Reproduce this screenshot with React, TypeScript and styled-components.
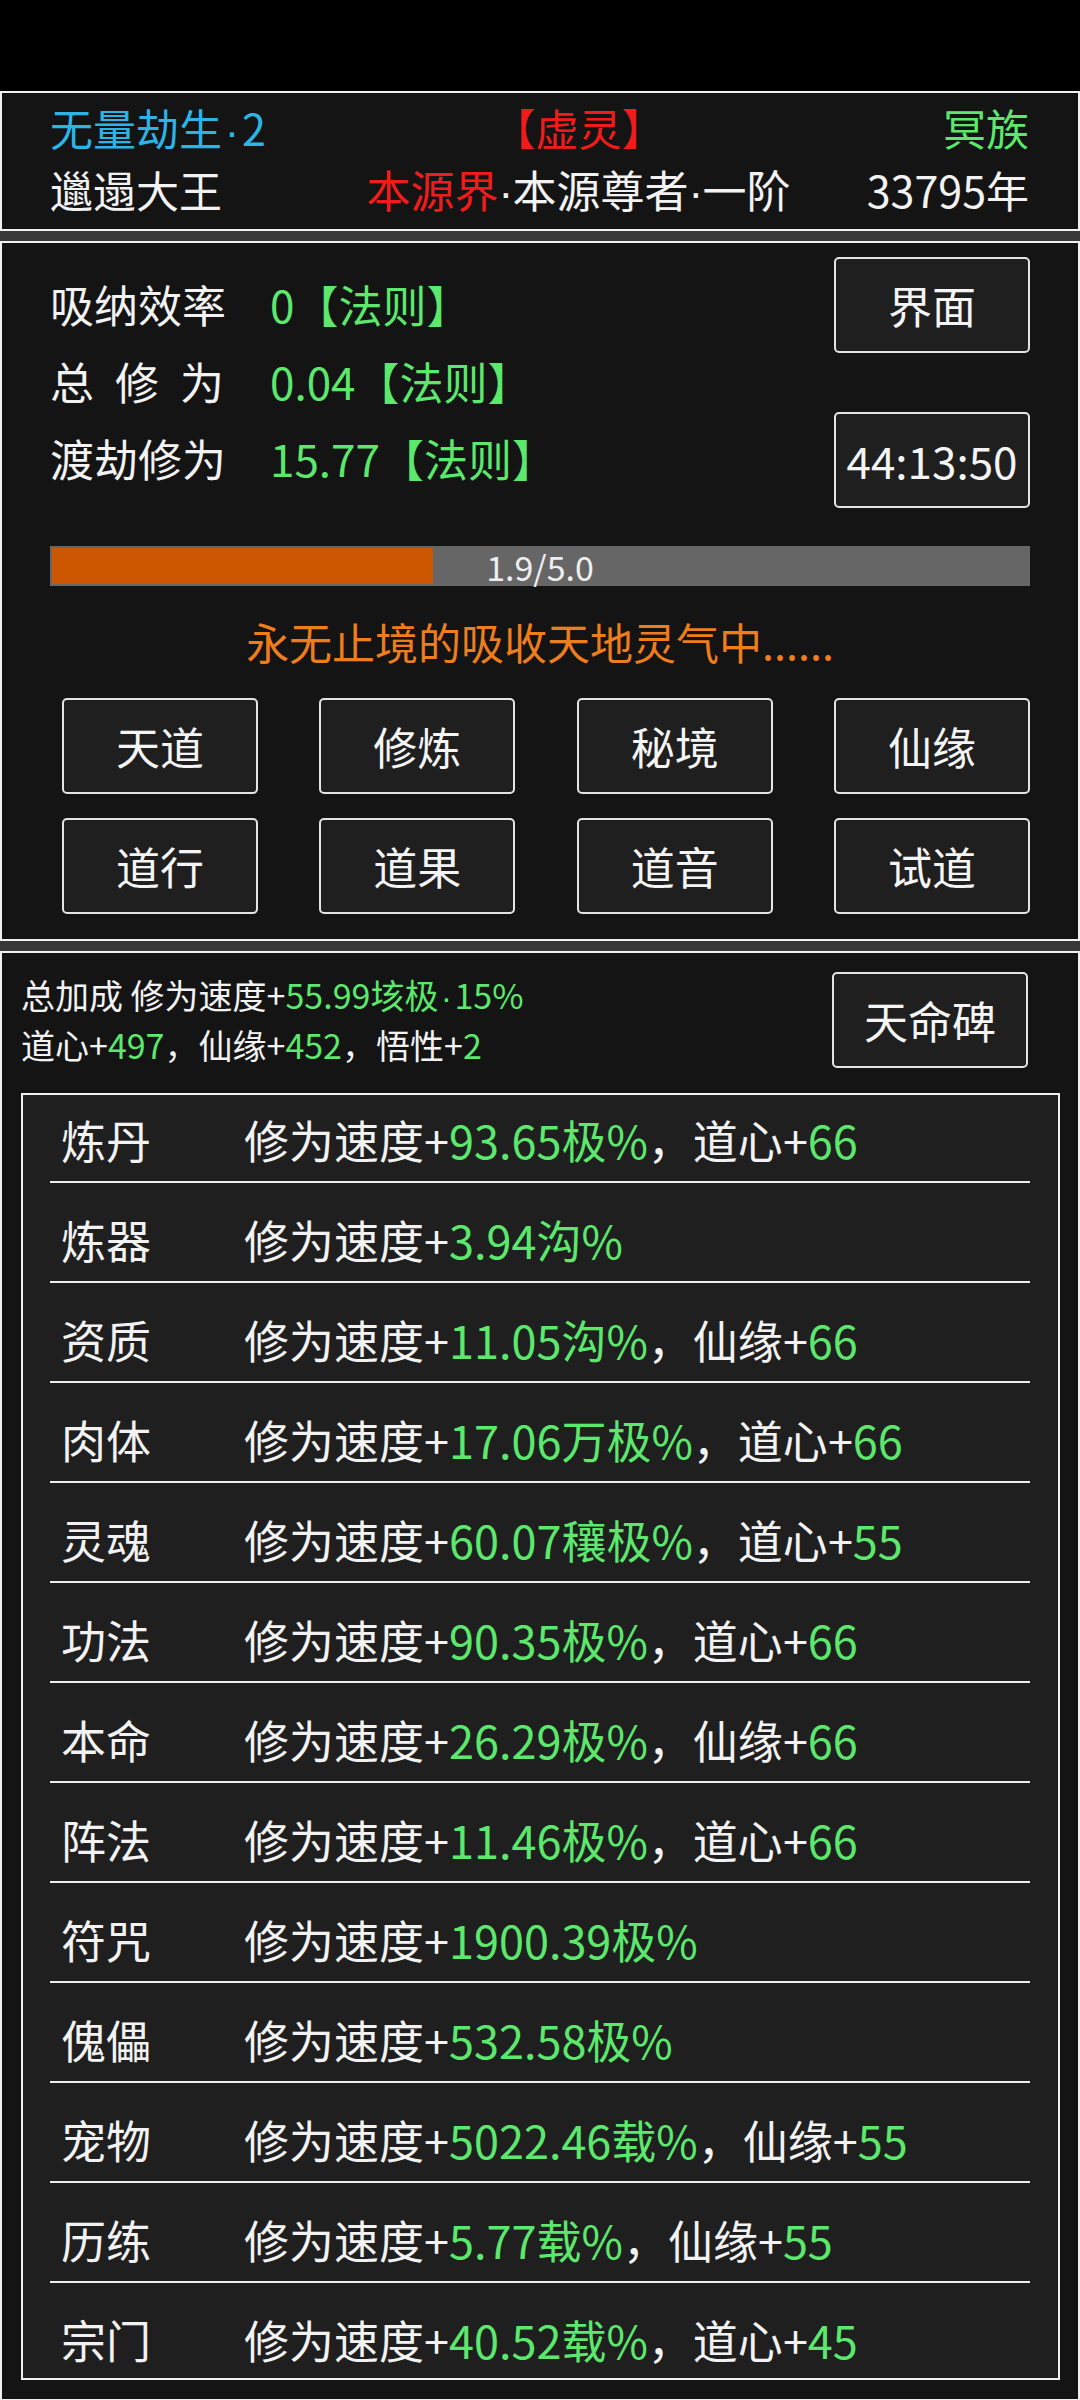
import React from "react";
import styled, { createGlobalStyle } from "styled-components";

const Global = createGlobalStyle`
  html, body { margin: 0; padding: 0; background: #383838; }
  body {
    font-family: "Noto Sans CJK SC", "Noto Sans", sans-serif;
    color: #f2f2f2;
  }
  * { box-sizing: border-box; }
`;

const Page = styled.div`
  width: 1080px;
  display: flex;
  flex-direction: column;
  background: #383838;
`;

const StatusBar = styled.div`
  height: 91px;
  background: #000;
`;

const Panels = styled.div`
  display: flex;
  flex-direction: column;
  gap: 10px;
`;

const Panel = styled.section<{ $pad: string }>`
  background: #141414;
  border: 2px solid #f0f0f0;
  padding: ${(p) => p.$pad};
`;

const HeaderRow = styled.div`
  display: grid;
  grid-template-columns: 280px 1fr 202px;
  font-size: 43px;
  line-height: 62px;
  height: 62px;
  white-space: nowrap;
`;

const Cell = styled.div<{ $align: "left" | "center" | "right"; $size?: number }>`
  text-align: ${(p) => p.$align};
  ${(p) => (p.$size ? `font-size: ${p.$size}px;` : "")}
`;

const C = styled.span<{ $c: string }>`
  color: ${(p) => p.$c};
`;

const Dot = styled.span<{ $w: number }>`
  display: inline-block;
  width: ${(p) => p.$w}px;
  text-align: center;
  line-height: 1;
  font-family: "Liberation Sans", sans-serif;
`;

const TopArea = styled.div`
  display: flex;
  justify-content: space-between;
`;

const StatList = styled.div`
  padding-top: 9px;
  display: flex;
  flex-direction: column;
`;

const StatRow = styled.div`
  display: flex;
  font-size: 44px;
  line-height: 77px;
  white-space: nowrap;
`;

const StatLabel = styled.span<{ $spread?: boolean }>`
  width: 220px;
  flex-shrink: 0;
  letter-spacing: ${(p) => (p.$spread ? "21px" : "0")};
`;

const SideButtons = styled.div`
  display: flex;
  flex-direction: column;
  gap: 59px;
`;

const Btn = styled.div`
  width: 196px;
  height: 96px;
  border: 2px solid #e4e4e4;
  border-radius: 5px;
  background: #1f1f1f;
  color: #f4f4f4;
  font-size: 44px;
  display: flex;
  align-items: center;
  justify-content: center;
  white-space: nowrap;
`;

const Bar = styled.div`
  position: relative;
  margin-top: 38px;
  height: 40px;
  padding: 2px;
  background: #666666;
`;

const BarFill = styled.div`
  height: 100%;
  background: #cc5500;
`;

const BarText = styled.div`
  position: absolute;
  inset: 0;
  display: flex;
  align-items: center;
  justify-content: center;
  font-size: 34px;
  color: #eeeeee;
`;

const Notice = styled.div`
  margin-top: 25px;
  text-align: center;
  font-size: 43px;
  line-height: 60px;
  color: #ee7d1c;
`;

const NavGrid = styled.div`
  margin-top: 27px;
  padding-left: 12px;
  display: grid;
  grid-template-columns: repeat(4, 196px);
  justify-content: space-between;
  row-gap: 24px;
`;

const SummaryArea = styled.div`
  display: flex;
  justify-content: space-between;
  align-items: center;
  padding-right: 32px;
`;

const Summary = styled.div`
  font-size: 34px;
  line-height: 50px;
  white-space: nowrap;
`;

const SummaryLine = styled.div`
  height: 50px;
`;

const Box = styled.div`
  margin-top: 23px;
  border: 2px solid #f0f0f0;
  background: #1f1f1f;
  padding: 0 28px 0 27px;
`;

const BonusRow = styled.div`
  display: flex;
  padding: 27px 0 11px 11px;
  font-size: 45px;
  line-height: 60px;
  height: 100px;
  border-bottom: 2px solid #eeeeee;
  white-space: nowrap;
  &:first-child {
    padding-top: 15px;
    height: 88px;
  }
  &:last-child {
    border-bottom: none;
    height: 95px;
  }
`;

const BonusLabel = styled.span`
  width: 183px;
  flex-shrink: 0;
`;

const GREEN = "#5be86c";
const CYAN = "#2bb4e5";
const RED = "#f01c1c";

type Bonus = { name: string; speed: string; extraName?: string; extra?: string };

const bonuses: Bonus[] = [
  { name: "炼丹", speed: "93.65极%", extraName: "道心", extra: "66" },
  { name: "炼器", speed: "3.94沟%" },
  { name: "资质", speed: "11.05沟%", extraName: "仙缘", extra: "66" },
  { name: "肉体", speed: "17.06万极%", extraName: "道心", extra: "66" },
  { name: "灵魂", speed: "60.07穰极%", extraName: "道心", extra: "55" },
  { name: "功法", speed: "90.35极%", extraName: "道心", extra: "66" },
  { name: "本命", speed: "26.29极%", extraName: "仙缘", extra: "66" },
  { name: "阵法", speed: "11.46极%", extraName: "道心", extra: "66" },
  { name: "符咒", speed: "1900.39极%" },
  { name: "傀儡", speed: "532.58极%" },
  { name: "宠物", speed: "5022.46载%", extraName: "仙缘", extra: "55" },
  { name: "历练", speed: "5.77载%", extraName: "仙缘", extra: "55" },
  { name: "宗门", speed: "40.52载%", extraName: "道心", extra: "45" },
];

const navItems = ["天道", "修炼", "秘境", "仙缘", "道行", "道果", "道音", "试道"];

const stats = [
  { label: "吸纳效率", value: "0【法则】" },
  { label: "总修为", value: "0.04【法则】", spread: true },
  { label: "渡劫修为", value: "15.77【法则】" },
];

export default function App() {
  const progress = 1.9 / 5.0;
  return (
    <>
      <Global />
      <Page>
        <StatusBar />
        <Panels>
          <Panel $pad="3px 49px 9px 48px">
            <HeaderRow>
              <Cell $align="left">
                <C $c={CYAN}>
                  无量劫生<Dot $w={20}>·</Dot>2
                </C>
              </Cell>
              <Cell $align="center">
                <C $c={RED}>【虚灵】</C>
              </Cell>
              <Cell $align="right">
                <C $c={GREEN}>冥族</C>
              </Cell>
            </HeaderRow>
            <HeaderRow>
              <Cell $align="left">邋遢大王</Cell>
              <Cell $align="center" $size={44}>
                <C $c={RED}>本源界</C>
                <Dot $w={14}>·</Dot>本源尊者<Dot $w={14}>·</Dot>一阶
              </Cell>
              <Cell $align="right">33795年</Cell>
            </HeaderRow>
          </Panel>

          <Panel $pad="14px 48px 25px 48px">
            <TopArea>
              <StatList>
                {stats.map((s) => (
                  <StatRow key={s.label}>
                    <StatLabel $spread={s.spread}>{s.label}</StatLabel>
                    <C $c={GREEN}>{s.value}</C>
                  </StatRow>
                ))}
              </StatList>
              <SideButtons>
                <Btn>界面</Btn>
                <Btn>44:13:50</Btn>
              </SideButtons>
            </TopArea>
            <Bar>
              <BarFill style={{ width: `${(progress * 100 + 1).toFixed(1)}%` }} />
              <BarText>1.9/5.0</BarText>
            </Bar>
            <Notice>永无止境的吸收天地灵气中......</Notice>
            <NavGrid>
              {navItems.map((n) => (
                <Btn key={n}>{n}</Btn>
              ))}
            </NavGrid>
          </Panel>

          <Panel $pad="17px 18px 19px 19px">
            <SummaryArea>
              <Summary>
                <SummaryLine>
                  总加成 修为速度+
                  <C $c={GREEN}>
                    55.99垓极<Dot $w={16}>·</Dot>15%
                  </C>
                </SummaryLine>
                <SummaryLine>
                  道心+<C $c={GREEN}>497</C>，仙缘+<C $c={GREEN}>452</C>，悟性+
                  <C $c={GREEN}>2</C>
                </SummaryLine>
              </Summary>
              <Btn>天命碑</Btn>
            </SummaryArea>
            <Box>
              {bonuses.map((b) => (
                <BonusRow key={b.name}>
                  <BonusLabel>{b.name}</BonusLabel>
                  <span>
                    修为速度+<C $c={GREEN}>{b.speed}</C>
                    {b.extraName && (
                      <>
                        ，{b.extraName}+<C $c={GREEN}>{b.extra}</C>
                      </>
                    )}
                  </span>
                </BonusRow>
              ))}
            </Box>
          </Panel>
        </Panels>
      </Page>
    </>
  );
}
